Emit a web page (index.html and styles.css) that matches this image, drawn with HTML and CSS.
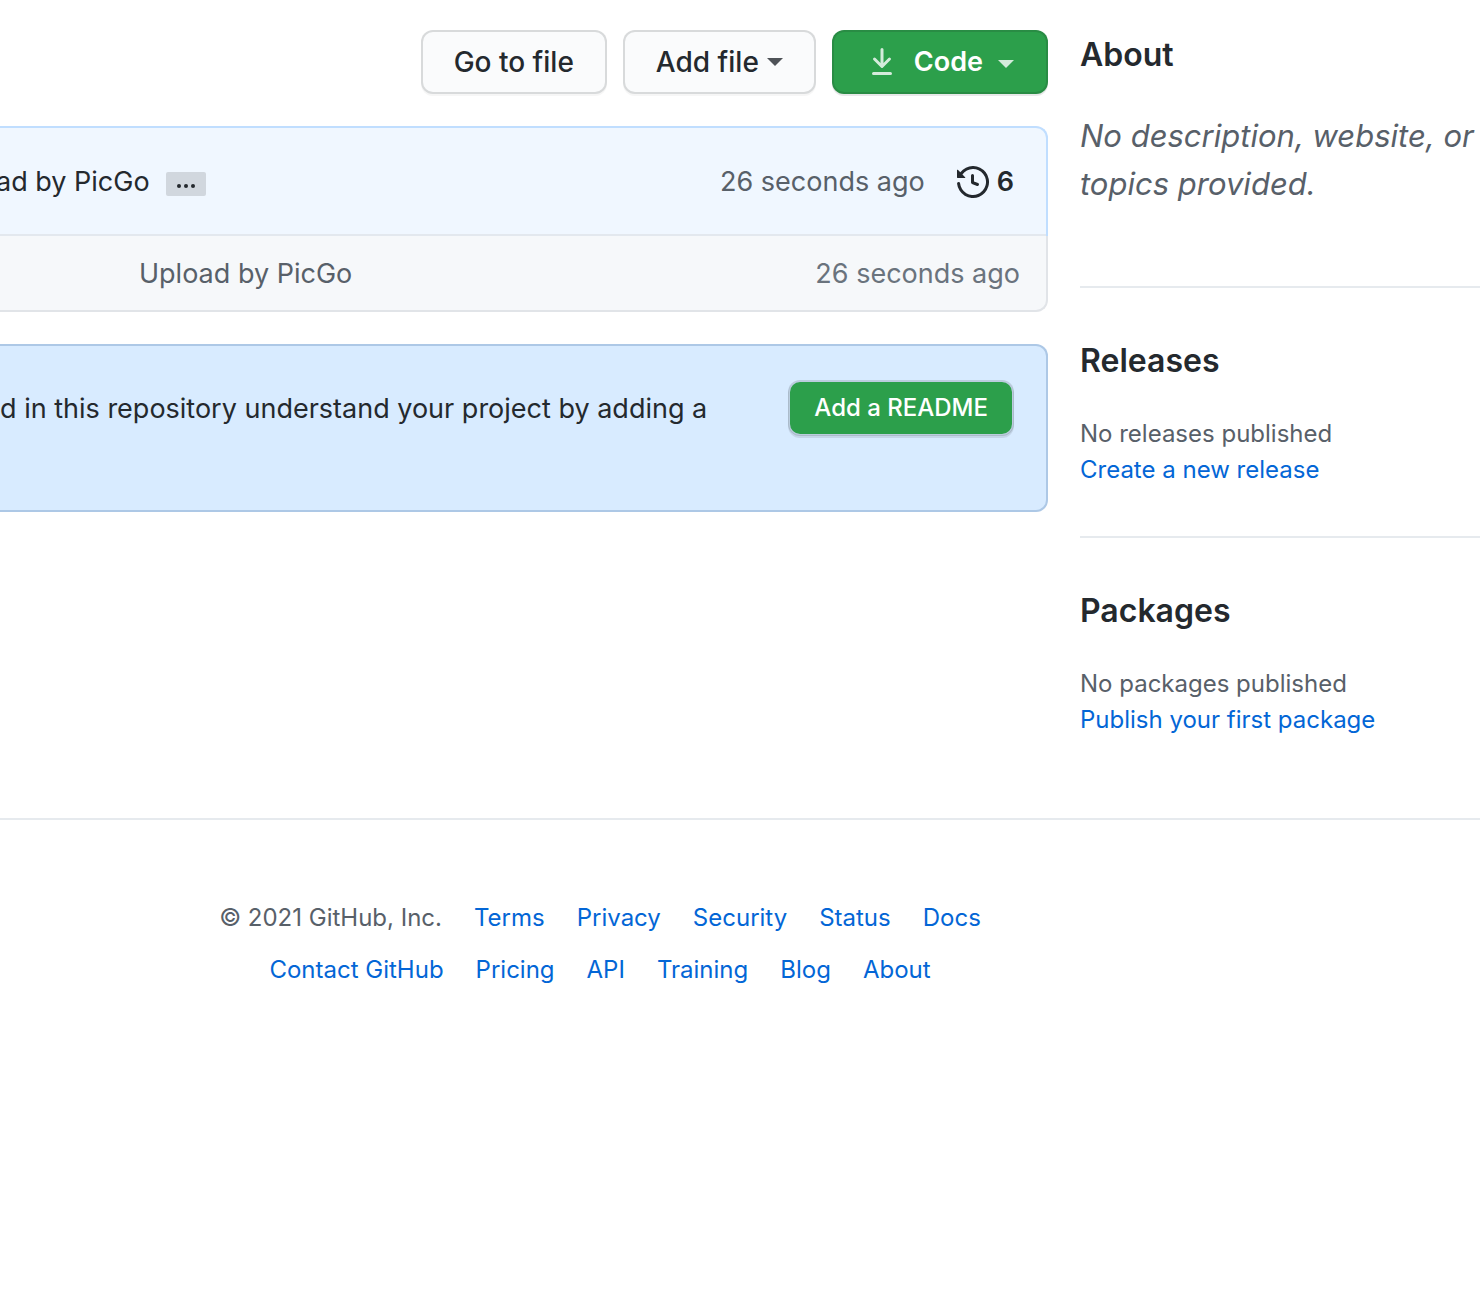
FILE: index.html
```html
<!DOCTYPE html>
<html lang="en">
<head>
<meta charset="utf-8">
<meta name="viewport" content="width=device-width, initial-scale=1">
<title>Repository</title>
<link rel="stylesheet" href="styles.css">
</head>
<body>
<div class="layout">
  <main class="content">
    <div class="toolbar">
      <button class="btn" type="button">Go to file</button>
      <button class="btn" type="button">Add file<span class="caret"></span></button>
      <button class="btn btn-primary btn-code" type="button">
        <svg class="icon" viewBox="0 0 16 16" aria-hidden="true"><path d="M7.47 10.78a.75.75 0 001.06 0l3.75-3.75a.75.75 0 00-1.06-1.06L8.75 8.44V1.75a.75.75 0 00-1.5 0v6.69L4.78 5.97a.75.75 0 00-1.06 1.06l3.75 3.75zM3.75 13a.75.75 0 000 1.5h8.5a.75.75 0 000-1.5h-8.5z"/></svg>
        Code<span class="caret"></span>
      </button>
    </div>

    <section class="files">
      <div class="commit">
        <span class="commit-message">ad by PicGo</span>
        <button class="expander" type="button" aria-label="Show commit details"><i></i><i></i><i></i></button>
        <span class="commit-time">26 seconds ago</span>
        <a class="history" href="#commits">
          <svg class="icon" viewBox="0 0 16 16" aria-hidden="true"><path d="M1.643 3.143L.427 1.927A.25.25 0 000 2.104V5.75c0 .138.112.25.25.25h3.646a.25.25 0 00.177-.427L2.715 4.215a6.5 6.5 0 11-1.18 4.458.75.75 0 10-1.493.154 8.001 8.001 0 101.6-5.684zM7.75 4a.75.75 0 01.75.75v2.992l2.028.812a.75.75 0 01-.557 1.392l-2.5-1A.75.75 0 017 8.25v-3.5A.75.75 0 017.75 4z"/></svg>
          <strong>6</strong>
        </a>
      </div>
      <div class="file-row">
        <span class="file-message">Upload by PicGo</span>
        <span class="file-time">26 seconds ago</span>
      </div>
    </section>

    <section class="readme">
      <p class="readme-text">d in this repository understand your project by adding a</p>
      <button class="btn btn-primary btn-small" type="button">Add a README</button>
    </section>
  </main>

  <aside class="sidebar">
    <section class="panel">
      <h2>About</h2>
      <p class="description">No description, website, or topics provided.</p>
    </section>
    <section class="panel">
      <h2>Releases</h2>
      <p>No releases published</p>
      <a href="#releases">Create a new release</a>
    </section>
    <section class="panel">
      <h2>Packages</h2>
      <p>No packages published</p>
      <a href="#packages">Publish your first package</a>
    </section>
  </aside>
</div>

<footer class="footer">
  <ul>
    <li>© 2021 GitHub, Inc.</li>
    <li><a href="#terms">Terms</a></li>
    <li><a href="#privacy">Privacy</a></li>
    <li><a href="#security">Security</a></li>
    <li><a href="#status">Status</a></li>
    <li><a href="#docs">Docs</a></li>
  </ul>
  <ul>
    <li><a href="#contact">Contact GitHub</a></li>
    <li><a href="#pricing">Pricing</a></li>
    <li><a href="#api">API</a></li>
    <li><a href="#training">Training</a></li>
    <li><a href="#blog">Blog</a></li>
    <li><a href="#about">About</a></li>
  </ul>
</footer>
</body>
</html>
```
FILE: styles.css
```css
* {
  box-sizing: border-box;
}

body {
  margin: 0;
  background: #fff;
  color: #24292e;
  font: 27px/42px Inter, "Liberation Sans", sans-serif;
}

h2,
p,
ul {
  margin: 0;
  padding: 0;
}

a {
  color: #0366d6;
  text-decoration: none;
}

.layout {
  display: grid;
  grid-template-columns: minmax(0, 1fr) 400px;
  column-gap: 32px;
  padding-top: 30px;
}

.toolbar {
  display: flex;
  justify-content: flex-end;
  gap: 16px;
  margin-bottom: 32px;
}

.btn {
  display: flex;
  align-items: center;
  height: 64px;
  padding: 0 31px;
  border: 2px solid rgba(27, 31, 35, .15);
  border-radius: 12px;
  background: #fafbfc;
  box-shadow: 0 2px 0 rgba(27, 31, 35, .04);
  color: #24292e;
  font: 500 28px/40px Inter, "Liberation Sans", sans-serif;
  white-space: nowrap;
}

.btn-primary {
  background: #2c9f4b;
  box-shadow: 0 2px 0 rgba(27, 31, 35, .1);
  color: #fff;
}

.btn-code {
  padding: 0 32px;
  font-size: 27px;
  font-weight: 600;
}

.btn-code .icon {
  margin-right: 16px;
  opacity: .8;
}

.btn-small {
  height: 56px;
  padding: 0 24px;
  background-clip: padding-box;
  font-size: 24px;
}

.caret {
  margin-left: 8px;
  border: 8px solid transparent;
  border-top-color: currentColor;
  border-bottom: 0;
  opacity: .8;
}

.btn-code .caret {
  margin: 4px 0 0 15px;
}

.icon {
  width: 32px;
  height: 32px;
  fill: currentColor;
}

.files {
  margin-bottom: 32px;
}

.commit {
  display: flex;
  align-items: center;
  height: 110px;
  padding-right: 32px;
  border: 2px solid #c0deff;
  border-width: 2px 2px 0 0;
  border-top-right-radius: 12px;
  background: #f0f7ff;
  box-shadow: inset 0 -2px #e3e8ee;
}

.commit-message {
  margin-left: -4px;
}

.expander {
  display: flex;
  align-items: center;
  justify-content: center;
  gap: 3px;
  width: 40px;
  height: 24px;
  margin: 4px 0 0 16px;
  padding: 4px 0 0;
  border: 0;
  border-radius: 2px;
  background: #d1d7de;
}

.expander i {
  width: 4px;
  height: 4px;
  border-radius: 50%;
  background: #24292e;
}

.commit-time {
  margin-left: auto;
  color: #586069;
}

.history {
  display: flex;
  align-items: center;
  gap: 8px;
  margin-left: 32px;
  color: #24292e;
}

.history strong {
  font-weight: 600;
}

.file-row {
  display: flex;
  justify-content: space-between;
  align-items: center;
  height: 76px;
  padding: 2px 26px 0 139px;
  border: 2px solid #e1e4e8;
  border-width: 0 2px 2px 0;
  border-bottom-right-radius: 12px;
  background: #f6f8fa;
  color: #586069;
}

.file-time {
  color: #6a737d;
}

.readme {
  display: flex;
  justify-content: space-between;
  align-items: flex-start;
  padding: 34px 32px 74px 0;
  border: 2px solid #adc8e6;
  border-left: 0;
  border-radius: 0 12px 12px 0;
  background: #d8ebff;
}

.readme-text {
  padding-top: 8px;
  white-space: nowrap;
}

.sidebar {
  color: #586069;
  font-size: 24px;
  line-height: 36px;
}

.panel {
  padding-bottom: 48px;
}

.panel + .panel {
  padding-top: 48px;
  border-top: 2px solid #e6eaee;
}

.panel h2 {
  margin-bottom: 30px;
  color: #24292e;
  font-size: 32px;
  font-weight: 600;
  line-height: 50px;
}

.panel .description {
  padding: 2px 0 30px;
  font-size: 31px;
  font-style: italic;
  line-height: 48px;
}

.footer {
  display: grid;
  gap: 16px;
  margin-top: 32px;
  padding: 80px 280px 80px 0;
  border-top: 2px solid #e6eaee;
  color: #586069;
  font-size: 24px;
  line-height: 36px;
}

.footer ul {
  display: flex;
  justify-content: center;
  gap: 32px;
  list-style: none;
}
```
